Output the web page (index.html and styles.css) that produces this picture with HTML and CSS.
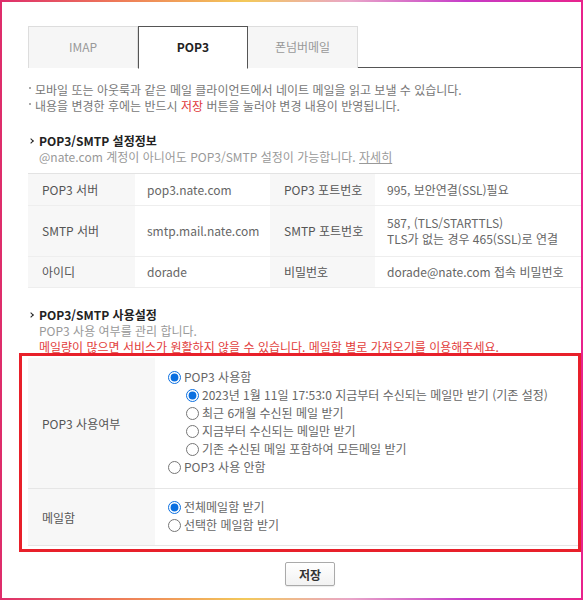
FILE: index.html
```html
<!DOCTYPE html>
<html lang="ko">
<head>
    <meta charset="UTF-8">
    <title>POP3 설정</title>
    <link rel="stylesheet" href="styles.css">
</head>
<body>
    <div class="page">
        <div class="content">
            <ul class="tabs">
                <li>IMAP</li>
                <li class="on">POP3</li>
                <li>폰넘버메일</li>
            </ul>
            <ul class="notes">
                <li>모바일 또는 아웃룩과 같은 메일 클라이언트에서 네이트 메일을 읽고 보낼 수 있습니다.</li>
                <li>내용을 변경한 후에는 반드시 <em>저장</em> 버튼을 눌러야 변경 내용이 반영됩니다.</li>
            </ul>

            <div class="section">
                <h3>POP3/SMTP 설정정보</h3>
                <p class="desc">@nate.com 계정이 아니어도 POP3/SMTP 설정이 가능합니다. <a href="#">자세히</a></p>
                <table class="info">
                    <tr>
                        <th class="c1">POP3 서버</th>
                        <td class="c2">pop3.nate.com</td>
                        <th class="c3">POP3 포트번호</th>
                        <td>995, 보안연결(SSL)필요</td>
                    </tr>
                    <tr>
                        <th>SMTP 서버</th>
                        <td>smtp.mail.nate.com</td>
                        <th>SMTP 포트번호</th>
                        <td>587, (TLS/STARTTLS)<br>TLS가 없는 경우 465(SSL)로 연결</td>
                    </tr>
                    <tr>
                        <th>아이디</th>
                        <td>dorade</td>
                        <th>비밀번호</th>
                        <td>dorade@nate.com 접속 비밀번호</td>
                    </tr>
                </table>
            </div>

            <div class="section">
                <h3>POP3/SMTP 사용설정</h3>
                <p class="desc">POP3 사용 여부를 관리 합니다.</p>
                <p class="warn">메일량이 많으면 서비스가 원활하지 않을 수 있습니다. 메일함 별로 가져오기를 이용해주세요.</p>
                <div class="mark">
                    <table class="setting">
                        <tr>
                            <th>POP3 사용여부</th>
                            <td>
                                <label><input type="radio" name="use" checked>POP3 사용함</label>
                                <div class="sub">
                                    <label><input type="radio" name="range" checked> 2023년 1월 11일 17:53:0 지금부터 수신되는 메일만 받기 (기존 설정)</label>
                                    <label><input type="radio" name="range">최근 6개월 수신된 메일 받기</label>
                                    <label><input type="radio" name="range">지금부터 수신되는 메일만 받기</label>
                                    <label><input type="radio" name="range">기존 수신된 메일 포함하여 모든메일 받기</label>
                                </div>
                                <label><input type="radio" name="use">POP3 사용 안함</label>
                            </td>
                        </tr>
                        <tr>
                            <th>메일함</th>
                            <td>
                                <label><input type="radio" name="box" checked>전체메일함 받기</label>
                                <label><input type="radio" name="box">선택한 메일함 받기</label>
                            </td>
                        </tr>
                    </table>
                </div>
            </div>

            <div class="btns"><button type="button">저장</button></div>
        </div>
        <div class="frame"></div>
    </div>
</body>
</html>
```

FILE: styles.css
```css
*{
    padding: 0;
    margin: 0;
    box-sizing: border-box;
}
body {
    font-family: "Noto Sans CJK KR", sans-serif;
    font-size: 12px;
    color: #555;
    background: #fff;
}
.page {
    width: 583px;
    height: 600px;
    position: relative;
    overflow: hidden;
}
.content {
    width: 562px;
    padding-top: 26px;
    margin-left: 28px;
}
.frame {
    position: absolute;
    left: 0;
    top: 0;
    right: 0;
    bottom: 0;
    border: 2px solid;
    border-image: linear-gradient(90deg, #de2d6b, #ee7a58 20%, #f3c95a 42%, #e9a6c8 60%, #c63cc8 80%, #e8238c) 1;
    pointer-events: none;
}

/* tabs */
.tabs {
    list-style: none;
    display: flex;
    border-bottom: 1px solid #555;
    height: 42px;
}
.tabs li {
    width: 110px;
    height: 42px;
    line-height: 40px;
    text-align: center;
    color: #999;
    background: #f6f6f6;
    border: 1px solid #ddd;
    border-bottom: none;
}
.tabs li + li {
    border-left: none;
}
.tabs li.on {
    background: #fff;
    color: #222;
    font-weight: bold;
    border: 1px solid #555;
    border-bottom: 1px solid #fff;
    height: 43px;
}

/* notes */
.notes {
    list-style: none;
    margin-top: 14px;
    color: #777;
}
.notes li {
    line-height: 16px;
    padding-left: 7px;
    position: relative;
}
.notes li:before {
    content: "";
    position: absolute;
    left: 1px;
    top: 5px;
    width: 2px;
    height: 2px;
    background: #aaa;
}
.notes em {
    font-style: normal;
    color: #e0383c;
}

/* sections */
.section {
    margin-top: 19px;
}
.section h3 {
    font-size: 12px;
    color: #222;
    line-height: 16px;
    padding-left: 11px;
    position: relative;
}
.section h3:before {
    content: "";
    position: absolute;
    left: 1px;
    top: 6px;
    width: 3px;
    height: 3px;
    border-top: 1.5px solid #222;
    border-right: 1.5px solid #222;
    transform: rotate(45deg);
}
.desc {
    color: #999;
    line-height: 16px;
    padding-left: 11px;
}
.desc a {
    color: #999;
}
.warn {
    color: #e2403c;
    line-height: 15px;
    padding-left: 11px;
}

table {
    width: 100%;
    border-collapse: collapse;
    border-top: 1px solid #e3e3e3;
}
th {
    text-align: left;
    font-weight: normal;
    color: #555;
    background: #f7f7f7;
    padding-left: 14px;
}
td {
    color: #666;
    padding-left: 12px;
}
.info {
    margin-top: 8px;
}
.info tr {
    border-bottom: 1px solid #eee;
}
.info th, .info td {
    line-height: 16px;
    padding-top: 7px;
    padding-bottom: 7px;
}
.info tr:first-child th, .info tr:first-child td {
    padding-top: 8px;
    padding-bottom: 7px;
}
.info .c1 { width: 107px; }
.info .c2 { width: 135px; }
.info .c3 { width: 105px; }
.info tr:nth-child(2) th, .info tr:nth-child(2) td {
    padding-top: 9px;
    padding-bottom: 9px;
}

/* highlighted setting box */
.mark {
    border: 3px solid #e8202a;
    margin-top: -1px;
    margin-left: -9px;
    margin-right: 9px;
    padding: 2px 0 3px 6px;
}
.setting {
    border-top: none;
}
.setting tr {
    border-bottom: 1px solid #e6e6e6;
}
.setting th {
    width: 127px;
}
.setting td {
    padding-left: 13px;
    color: #666;
}
.setting tr:first-child td {
    padding-top: 10px;
    padding-bottom: 12px;
}
.setting tr:nth-child(2) td {
    padding-top: 9px;
    padding-bottom: 11px;
}
.setting label {
    display: flex;
    align-items: center;
    height: 18px;
    line-height: 18px;
}
.setting .sub {
    padding-left: 18px;
}
.setting input {
    width: 13px;
    height: 13px;
    margin: 0 3px 0 0;
    accent-color: #0a6fe0;
}

/* button */
.btns {
    text-align: center;
    margin-top: 10px;
    padding-left: 2px;
}
.btns button {
    width: 50px;
    height: 24px;
    font-family: "Noto Sans CJK KR", sans-serif;
    font-size: 12px;
    font-weight: bold;
    color: #333;
    background: linear-gradient(#fff, #f2f2f2);
    border: 1px solid #aaa;
    border-radius: 2px;
    box-shadow: 0 1px 1px rgba(0,0,0,0.08);
}
```
